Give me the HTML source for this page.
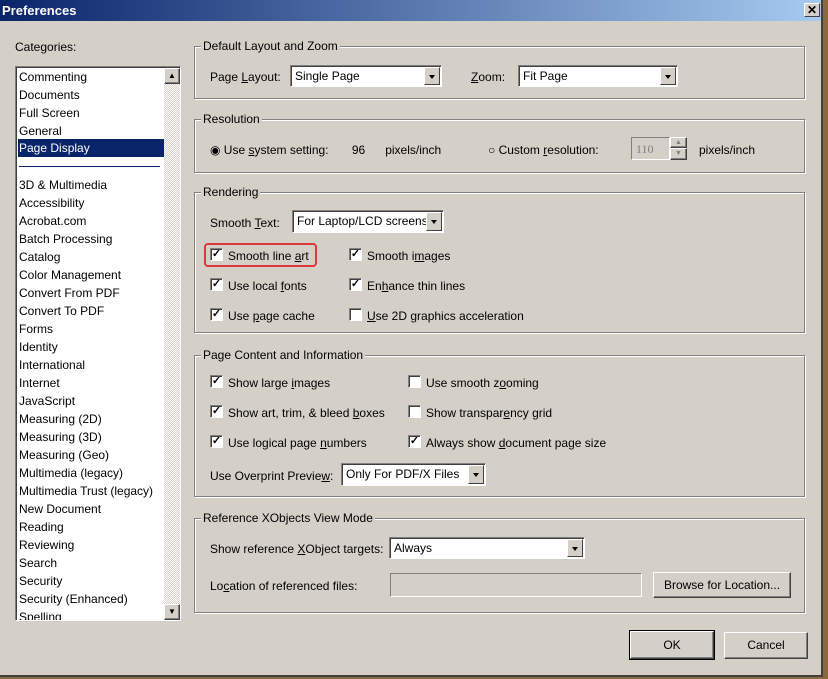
<!DOCTYPE html>
<html><head><style>
*{margin:0;padding:0;box-sizing:border-box}
body{width:828px;height:679px;overflow:hidden;background:#8a6a3a;font-family:"Liberation Sans",sans-serif;font-size:12px;color:#000;position:relative}
.dlg{position:absolute;left:0;top:0;width:823px;height:677px;background:#d4d0c8;border-right:2px solid #404040;border-bottom:2px solid #404040}
.title{position:absolute;left:0;top:0;width:821px;height:21px;background:linear-gradient(90deg,#0a246a,#a6caf0);color:#fff;font-weight:bold;font-size:13px;line-height:22px;padding-left:2px}
.close{position:absolute;left:804px;top:3px;width:16px;height:14px;background:#d4d0c8;border:1px solid;border-color:#fff #404040 #404040 #fff;font-size:12px;font-weight:bold;line-height:12px;text-align:center;color:#000}
.a{position:absolute;white-space:nowrap;line-height:16px;margin-top:1px}
.list{position:absolute;left:15px;top:66px;width:166px;height:555px;background:#fff;border:1px solid;border-color:#808080 #fff #fff #808080;box-shadow:inset 1px 1px 0 #404040;overflow:hidden}
.it{position:absolute;left:3px;height:18px;line-height:19px}
.sel{left:2px;width:146px;background:#0a246a;color:#fff;padding-left:1px}
.sb{position:absolute;left:148px;top:1px;width:16px;height:552px;background:repeating-conic-gradient(#d4d0c8 0 25%,#fff 0 50%) 0 0/2px 2px}
.btn{position:absolute;background:#d4d0c8;border:1px solid;border-color:#fff #404040 #404040 #fff;box-shadow:inset -1px -1px 0 #808080;text-align:center}
.grp{position:absolute;border:1px solid #808080;box-shadow:1px 1px 0 #fff,inset 1px 1px 0 #fff}
.lg{position:absolute;top:-8px;left:6px;background:#d4d0c8;padding:0 2px;white-space:nowrap}
.combo{position:absolute;background:#fff;border:1px solid;border-color:#808080 #fff #fff #808080;box-shadow:inset 1px 1px 0 #404040;padding-left:4px;line-height:21px;white-space:nowrap;overflow:hidden}
.dd{position:absolute;right:1px;top:1px;width:16px;bottom:1px;background:#d4d0c8;border:1px solid;border-color:#fff #404040 #404040 #fff}
.dd:after{content:"";position:absolute;left:4px;top:7px;border-left:3.5px solid transparent;border-right:3.5px solid transparent;border-top:4px solid #000}
.cb{position:absolute;width:13px;height:13px;background:#fff;border:1px solid;border-color:#808080 #fff #fff #808080;box-shadow:inset 1px 1px 0 #404040;font-size:11px;line-height:11px;text-align:center;font-weight:bold}
u{text-decoration:underline}
</style></head><body>
<div class="dlg">
<div class="title">Preferences</div>
<div class="close">✕</div>
<div class="a" style="left:15px;top:38px">Categories:</div>
<div class="list">
<div class="it" style="top:1px">Commenting</div>
<div class="it" style="top:19px">Documents</div>
<div class="it" style="top:37px">Full Screen</div>
<div class="it" style="top:55px">General</div>
<div class="it sel" style="top:72px;height:18px">Page Display</div>
<div style="position:absolute;left:3px;top:99px;width:141px;height:1px;background:#0a246a"></div>
<div class="it" style="top:109px">3D &amp; Multimedia</div>
<div class="it" style="top:127px">Accessibility</div>
<div class="it" style="top:145px">Acrobat.com</div>
<div class="it" style="top:163px">Batch Processing</div>
<div class="it" style="top:181px">Catalog</div>
<div class="it" style="top:199px">Color Management</div>
<div class="it" style="top:217px">Convert From PDF</div>
<div class="it" style="top:235px">Convert To PDF</div>
<div class="it" style="top:253px">Forms</div>
<div class="it" style="top:271px">Identity</div>
<div class="it" style="top:289px">International</div>
<div class="it" style="top:307px">Internet</div>
<div class="it" style="top:325px">JavaScript</div>
<div class="it" style="top:343px">Measuring (2D)</div>
<div class="it" style="top:361px">Measuring (3D)</div>
<div class="it" style="top:379px">Measuring (Geo)</div>
<div class="it" style="top:397px">Multimedia (legacy)</div>
<div class="it" style="top:415px">Multimedia Trust (legacy)</div>
<div class="it" style="top:433px">New Document</div>
<div class="it" style="top:451px">Reading</div>
<div class="it" style="top:469px">Reviewing</div>
<div class="it" style="top:487px">Search</div>
<div class="it" style="top:505px">Security</div>
<div class="it" style="top:523px">Security (Enhanced)</div>
<div class="it" style="top:541px">Spelling</div>
<div class="sb">
<div class="btn" style="left:0;top:0;width:16px;height:16px;font-size:8px;line-height:13px">▲</div>
<div class="btn" style="left:0;top:536px;width:16px;height:16px;font-size:8px;line-height:13px">▼</div>
</div>
</div>

<div class="grp" style="left:194px;top:46px;width:611px;height:53px"><div class="lg">Default Layout and Zoom</div></div>
<div class="a" style="left:210px;top:68px">Page <u>L</u>ayout:</div>
<div class="combo" style="left:290px;top:65px;width:152px;height:22px">Single Page<div class="dd"></div></div>
<div class="a" style="left:471px;top:68px"><u>Z</u>oom:</div>
<div class="combo" style="left:518px;top:65px;width:160px;height:22px">Fit Page<div class="dd"></div></div>

<div class="grp" style="left:194px;top:119px;width:611px;height:54px"><div class="lg">Resolution</div></div>
<div class="a" style="left:210px;top:141px">◉ Use <u>s</u>ystem setting:&nbsp;&nbsp;&nbsp;&nbsp;&nbsp;&nbsp;&nbsp;96&nbsp;&nbsp;&nbsp;&nbsp;&nbsp;&nbsp;pixels/inch</div>
<div class="a" style="left:488px;top:141px">○ Custom <u>r</u>esolution:</div>
<div class="a" style="left:631px;top:136px;width:39px;height:23px;border:1px solid;border-color:#808080 #fff #fff #808080;color:#808080;padding:3px 0 0 4px;font-family:'Liberation Serif',serif">110</div>
<div class="btn" style="left:670px;top:137px;width:17px;height:11px;font-size:7px;line-height:9px;color:#808080">▲</div>
<div class="btn" style="left:670px;top:148px;width:17px;height:12px;font-size:7px;line-height:10px;color:#808080">▼</div>
<div class="a" style="left:699px;top:141px">pixels/inch</div>

<div class="grp" style="left:194px;top:192px;width:611px;height:141px"><div class="lg">Rendering</div></div>
<div class="a" style="left:210px;top:214px">Smooth <u>T</u>ext:</div>
<div class="combo" style="left:292px;top:210px;width:152px;height:23px">For Laptop/LCD screens<div class="dd"></div></div>
<div style="position:absolute;left:204px;top:243px;width:113px;height:24px;border:2px solid #e0383a;border-radius:4px"></div>
<div class="cb" style="left:210px;top:248px">✓</div><div class="a" style="left:228px;top:247px">Smooth line <u>a</u>rt</div>
<div class="cb" style="left:349px;top:248px">✓</div><div class="a" style="left:367px;top:247px">Smooth i<u>m</u>ages</div>
<div class="cb" style="left:210px;top:278px">✓</div><div class="a" style="left:228px;top:277px">Use local <u>f</u>onts</div>
<div class="cb" style="left:349px;top:278px">✓</div><div class="a" style="left:367px;top:277px">En<u>h</u>ance thin lines</div>
<div class="cb" style="left:210px;top:308px">✓</div><div class="a" style="left:228px;top:307px">Use <u>p</u>age cache</div>
<div class="cb" style="left:349px;top:308px"></div><div class="a" style="left:367px;top:307px"><u>U</u>se 2D graphics acceleration</div>

<div class="grp" style="left:194px;top:355px;width:611px;height:142px"><div class="lg">Page Content and Information</div></div>
<div class="cb" style="left:210px;top:375px">✓</div><div class="a" style="left:228px;top:374px">Show large <u>i</u>mages</div>
<div class="cb" style="left:408px;top:375px"></div><div class="a" style="left:426px;top:374px">Use smooth z<u>o</u>oming</div>
<div class="cb" style="left:210px;top:405px">✓</div><div class="a" style="left:228px;top:404px">Show art, trim, &amp; bleed <u>b</u>oxes</div>
<div class="cb" style="left:408px;top:405px"></div><div class="a" style="left:426px;top:404px">Show transpar<u>e</u>ncy grid</div>
<div class="cb" style="left:210px;top:435px">✓</div><div class="a" style="left:228px;top:434px">Use logical page <u>n</u>umbers</div>
<div class="cb" style="left:408px;top:435px">✓</div><div class="a" style="left:426px;top:434px">Always show <u>d</u>ocument page size</div>
<div class="a" style="left:210px;top:467px">Use Overprint Previe<u>w</u>:</div>
<div class="combo" style="left:341px;top:463px;width:145px;height:23px">Only For PDF/X Files<div class="dd"></div></div>

<div class="grp" style="left:194px;top:518px;width:611px;height:95px"><div class="lg">Reference XObjects View Mode</div></div>
<div class="a" style="left:210px;top:540px">Show reference <u>X</u>Object targets:</div>
<div class="combo" style="left:389px;top:537px;width:196px;height:22px">Always<div class="dd"></div></div>
<div class="a" style="left:210px;top:577px">Lo<u>c</u>ation of referenced files:</div>
<div class="a" style="left:390px;top:572px;width:252px;height:24px;border:1px solid;border-color:#808080 #fff #fff #808080"></div>
<div class="btn" style="left:653px;top:572px;width:138px;height:26px;line-height:24px">Browse for Location...</div>

<div class="btn" style="left:630px;top:631px;width:84px;height:28px;line-height:26px;outline:1px solid #000">OK</div>
<div class="btn" style="left:724px;top:632px;width:84px;height:27px;line-height:25px">Cancel</div>
</div>
</body></html>
